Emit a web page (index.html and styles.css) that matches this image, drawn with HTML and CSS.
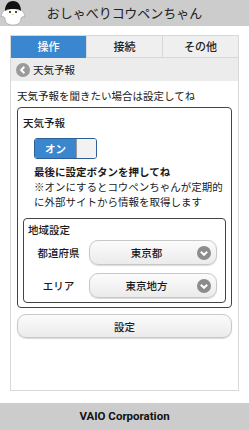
FILE: index.html
```html
<!DOCTYPE html>
<html lang="ja">
<head>
<meta charset="utf-8">
<title>おしゃべりコウペンちゃん</title>
<link rel="stylesheet" href="styles.css">
</head>
<body>
<header class="top">
  <svg class="logo" width="26" height="26" viewBox="0 0 26 26">
    <path d="M1 17 C2 12 4 10 6 10 L20 10 C22 10 24 12 25 17 C23 16 22 17 21 18 C21 23 18 25 13 25 C8 25 5 23 5 18 C4 17 3 16 1 17 Z" fill="#fff" stroke="#999" stroke-width="0.6"/>
    <path d="M5 11 C5 5 8 1 13 1 C18 1 21 5 21 11 C19 9 17 9 13 10 C9 9 7 9 5 11 Z" fill="#111"/>
    <ellipse cx="13" cy="13" rx="7" ry="4" fill="#fff"/>
    <circle cx="10" cy="12" r="1" fill="#111"/>
    <circle cx="16" cy="12" r="1" fill="#111"/>
    <path d="M12 14 L14 14 L13 15 Z" fill="#e8b040"/>
  </svg>
  <h1 class="title">おしゃべりコウペンちゃん</h1>
</header>
<main class="panel">
  <nav class="tabs">
    <div class="tab active">操作</div>
    <div class="tab">接続</div>
    <div class="tab">その他</div>
  </nav>
  <div class="back">
    <span class="back-icon">
      <svg width="14" height="14" viewBox="0 0 14 14"><circle cx="7" cy="7" r="7" fill="#9a9a9a"/><path d="M8.3 3.8 L5.2 7 L8.3 10.2" fill="none" stroke="#fff" stroke-width="2"/></svg>
    </span>
    <span>天気予報</span>
  </div>
  <div class="content">
    <p class="lead">天気予報を聞きたい場合は設定してね</p>
    <section class="box">
      <div class="legend">天気予報</div>
      <div class="toggle"><span class="on">オン</span><span class="knob"></span></div>
      <p class="note strong">最後に設定ボタンを押してね</p>
      <p class="note">※オンにするとコウペンちゃんが定期的に外部サイトから情報を取得します</p>
      <section class="box inner">
        <div class="legend">地域設定</div>
        <div class="row">
          <span class="label">都道府県</span>
          <div class="select"><span class="value">東京都</span><span class="chev"><svg width="14" height="14" viewBox="0 0 14 14"><circle cx="7" cy="7" r="7" fill="#8c8c8c"/><path d="M3.8 5.7 L7 8.8 L10.2 5.7" fill="none" stroke="#fff" stroke-width="2"/></svg></span></div>
        </div>
        <div class="row">
          <span class="label">エリア</span>
          <div class="select"><span class="value">東京地方</span><span class="chev"><svg width="14" height="14" viewBox="0 0 14 14"><circle cx="7" cy="7" r="7" fill="#8c8c8c"/><path d="M3.8 5.7 L7 8.8 L10.2 5.7" fill="none" stroke="#fff" stroke-width="2"/></svg></span></div>
        </div>
      </section>
    </section>
    <button class="submit">設定</button>
  </div>
</main>
<footer class="foot">VAIO Corporation</footer>
</body>
</html>
```

FILE: styles.css
```css
* { box-sizing: border-box; }
html, body { margin: 0; padding: 0; }
body {
  width: 249px;
  height: 430px;
  display: flex;
  flex-direction: column;
  background: #fff;
  font-family: "Noto Sans CJK JP", "Noto Sans", sans-serif;
  color: #1a1a1a;
  font-size: 10.5px;
  line-height: 15px;
}
.top {
  height: 26px;
  background: #cccccc;
  display: flex;
  align-items: center;
  position: relative;
}
.logo { position: absolute; left: 0; top: 0; }
.title {
  margin: 0;
  flex: 1;
  text-align: center;
  font-size: 13px;
  font-weight: normal;
  color: #222;
  line-height: 26px;
}
.panel {
  flex: 1;
  margin: 9px 10px 12px;
  border: 1px solid #d8d8d8;
  display: flex;
  flex-direction: column;
}
.tabs { display: flex; height: 22px; }
.tab {
  flex: 1;
  display: flex;
  align-items: center;
  justify-content: center;
  background: #efefef;
  border-left: 1px solid #d8d8d8;
  border-bottom: 1px solid #d8d8d8;
  font-size: 11px;
  font-weight: 500;
  color: #222;
}
.tab.active {
  background: #3a87d0;
  color: #fff;
  border-left: none;
  border-bottom-color: #3a87d0;
}
.back {
  height: 23px;
  background: #ececec;
  display: flex;
  align-items: center;
  gap: 3px;
  padding-left: 5px;
  font-size: 10.5px;
}
.back-icon { display: flex; }
.content { padding: 7px 6px 0; }
.lead { margin: 0 0 4px; }
.box {
  border: 1px solid #444;
  border-radius: 4px;
  padding: 7px 5px 4px;
}
.legend { line-height: 15px; font-weight: 500; }
.toggle {
  margin: 8px 0 0 11px;
  width: 63px;
  height: 21px;
  display: flex;
  border: 1px solid #2c5f96;
  border-radius: 3px;
  overflow: hidden;
}
.on {
  flex: 1;
  background: #3a87d0;
  color: #fff;
  font-weight: bold;
  display: flex;
  align-items: center;
  justify-content: center;
  font-size: 10.5px;
}
.knob {
  width: 20px;
  background: #f2f2f2;
  border-left: 1px solid #9a9a9a;
}
.note { margin: 0 0 0 11px; }
.note.strong { margin-top: 5px; font-weight: bold; }
.box.inner {
  margin-top: 9px;
  padding: 3px 8px 4px 4px;
}
.row {
  display: flex;
  align-items: center;
  height: 25px;
  margin-top: 3px;
}
.row + .row { margin-top: 8px; }
.label {
  width: 61px;
  text-align: center;
  font-weight: 500;
}
.select {
  flex: 1;
  height: 25px;
  display: flex;
  align-items: center;
  border: 1px solid #c8c8c8;
  border-radius: 9px;
  background: linear-gradient(#fbfbfb, #ebebeb);
  box-shadow: 0 1px 1px rgba(0,0,0,0.15);
  padding-right: 5px;
  font-weight: 500;
}
.value { flex: 1; text-align: center; padding-left: 6px; }
.chev { display: flex; }
.submit {
  margin-top: 6px;
  width: 100%;
  height: 24px;
  border: 1px solid #c8c8c8;
  border-radius: 9px;
  background: linear-gradient(#fbfbfb, #ebebeb);
  box-shadow: 0 1px 1px rgba(0,0,0,0.15);
  font-family: "Noto Sans CJK JP", sans-serif;
  font-size: 10.5px;
  font-weight: 500;
  color: #222;
  padding: 0;
}
.foot {
  height: 27px;
  background: #cccccc;
  display: flex;
  align-items: center;
  justify-content: center;
  font-family: "Roboto", "Liberation Sans", sans-serif;
  font-weight: bold;
  font-size: 11.5px;
  color: #111;
}
```
